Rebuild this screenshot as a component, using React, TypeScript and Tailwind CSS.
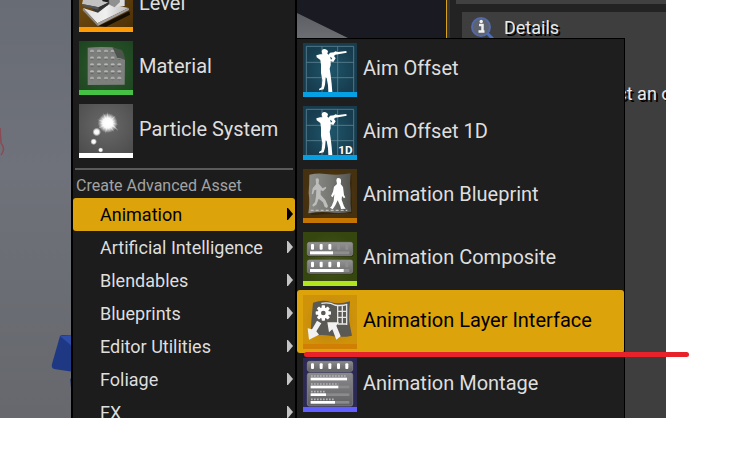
import type { ReactNode } from 'react';

function Svg({ top, children }: { top: number; children: ReactNode }) {
  return (
    <svg viewBox={`15 ${top} 162 162`} className="block size-[54px] shrink-0" aria-hidden="true">
      {children}
    </svg>
  );
}

function LevelIcon() {
  return (
    <Svg top={-66}>
      <defs>
        <linearGradient id="lvBg" x1="0" y1="0" x2="1" y2="1">
          <stop offset="0" stopColor="#7a5212" />
          <stop offset="1" stopColor="#4a2f06" />
        </linearGradient>
        <linearGradient id="lvTile" x1="0" y1="0" x2="1" y2="0">
          <stop offset="0" stopColor="#dedede" />
          <stop offset="0.5" stopColor="#f0f0f0" />
          <stop offset="1" stopColor="#b9b9b9" />
        </linearGradient>
      </defs>
      <rect x="15" y="-66" width="162" height="162" fill="url(#lvBg)" />
      <path d="M74 78 L166 34 L168 44 L96 80 Z" fill="#150e03" />
      <path d="M22 -20 L95 -50 L160 10 L70 50 Z" fill="#3a3a3a" />
      <path d="M27 24 L72 38 L106 12 L164 24 L70 70 Z" fill="url(#lvTile)" />
      <path d="M27 24 L70 70 L71 78 L26 31 Z" fill="#8a8a8a" />
      <path d="M164 24 L165 30 L71 78 L70 70 Z" fill="#a2a2a2" />
      <path d="M30 -14 L82 -8 L102 8 L74 22 L24 12 Z" fill="#c2c2c2" />
      <path d="M24 12 L74 22 L74 29 L26 19 Z" fill="#555" />
      <path d="M74 22 L102 8 L102 15 L74 29 Z" fill="#303030" />
      <path d="M104 -22 L136 -14 L140 14 L122 22 L106 14 Z" fill="#909090" />
      <path d="M136 -14 L152 0 L152 18 L122 22 L138 6 Z" fill="#dcdcdc" />
      <path d="M82 -6 L104 -2 L100 7 L86 4 Z" fill="#1d1d1d" />
      <rect x="15" y="81" width="162" height="15" fill="#ff9c05" />
    </Svg>
  );
}

function MaterialIcon() {
  const cols = [54, 75, 96, 116, 136];
  const rows = [154, 174, 194, 215, 235];
  return (
    <Svg top={123}>
      <defs>
        <radialGradient id="mtBg" cx="0.5" cy="0.5" r="0.75">
          <stop offset="0" stopColor="#2e5c2e" />
          <stop offset="1" stopColor="#1c421f" />
        </radialGradient>
        <linearGradient id="mtBump" x1="0" y1="0" x2="0" y2="1">
          <stop offset="0" stopColor="#8c8c8c" />
          <stop offset="0.45" stopColor="#b8b8b8" />
          <stop offset="1" stopColor="#4e4e4e" />
        </linearGradient>
      </defs>
      <rect x="15" y="123" width="162" height="162" fill="url(#mtBg)" />
      <path d="M41 143 Q70 140 115 142 Q140 150 153 180 L152 254 L41 255 Z" fill="#7c7f7c" />
      {rows.map((y) =>
        cols.map((x) =>
          x === 136 && y === 154 ? null : (
            <ellipse key={`${x}-${y}`} cx={x} cy={y} rx="6" ry="6" fill="url(#mtBump)" />
          ),
        ),
      )}
      <path d="M115 142 Q122 156 130 174 Q142 174 153 180 Q150 158 143 150 Z" fill="#4c554c" />
      <rect x="15" y="270" width="162" height="15" fill="#45c144" />
    </Svg>
  );
}

function ParticleIcon() {
  const rays = [0, 24, 48, 72, 96, 120, 144, 168, 192, 216, 240, 264, 288, 312, 336];
  return (
    <Svg top={312}>
      <defs>
        <radialGradient id="ptBg" cx="0.5" cy="0.4" r="0.7">
          <stop offset="0" stopColor="#6a6a6a" />
          <stop offset="1" stopColor="#4c4c4c" />
        </radialGradient>
        <radialGradient id="ptGlow">
          <stop offset="0" stopColor="#fff" />
          <stop offset="0.5" stopColor="#fff" stopOpacity="0.95" />
          <stop offset="1" stopColor="#fff" stopOpacity="0" />
        </radialGradient>
      </defs>
      <rect x="15" y="312" width="162" height="162" fill="url(#ptBg)" />
      <circle cx="101" cy="369" r="30" fill="url(#ptGlow)" />
      {rays.map((a, i) => (
        <path
          key={a}
          d={i % 2 ? 'M-4 0 L0 -25 L4 0 Z' : 'M-4 0 L0 -33 L4 0 Z'}
          transform={`translate(101 369) rotate(${a})`}
          fill="#fff"
          opacity="0.5"
        />
      ))}
      <path d="M101 369 L134 393 L108 362 Z" fill="#fff" opacity="0.5" />
      <circle cx="68" cy="396" r="13" fill="url(#ptGlow)" />
      <circle cx="59" cy="425" r="10" fill="url(#ptGlow)" />
      <circle cx="80" cy="450" r="8" fill="url(#ptGlow)" />
      <rect x="15" y="459" width="162" height="15" fill="#fff" />
    </Svg>
  );
}

function AimIcon({ oneD = false }: { oneD?: boolean }) {
  return (
    <Svg top={15}>
      <defs>
        <radialGradient id="amBg">
          <stop offset="0" stopColor="#1f566b" />
          <stop offset="1" stopColor="#173c4e" />
        </radialGradient>
      </defs>
      <rect x="15" y="15" width="162" height="162" fill="url(#amBg)" />
      <path
        d="M25 25 H167 V162 M25 25 V162 M72 25 V162 M119 25 V162 M25 73 H167 M25 119 H167"
        stroke="#5d8391"
        strokeWidth="2.5"
        fill="none"
      />
      <path
        d="M73 35 Q79 31 87 36 L90 40 L88 47 L92 50 L96 44 L108 43 L112 40 L120 42 L145 39 L146 44 L112 50 L108 54 L113 61 L106 72 L98 70 L98 82 L95 92 L98 112 L101 138 L103 162 L91 162 L90 142 L86 120 L83 118 L81 140 L77 154 L64 157 L63 153 L71 148 L73 126 L69 104 L69 80 L67 66 L56 58 L55 52 L66 49 L73 49 L71 40 Z"
        fill="#fff"
      />
      <path d="M96 56 L103 61 L99 65 Z" fill="#1f566b" />
      {oneD && (
        <text
          x="121"
          y="160"
          fontSize="35"
          fontWeight="700"
          fill="#fff"
          fontFamily="Roboto, sans-serif"
        >
          1D
        </text>
      )}
      <rect x="15" y="162" width="162" height="15" fill="#069fe3" />
    </Svg>
  );
}

function BlueprintIcon() {
  return (
    <Svg top={12}>
      <defs>
        <radialGradient id="bpBg">
          <stop offset="0" stopColor="#573a12" />
          <stop offset="1" stopColor="#45300f" />
        </radialGradient>
        <linearGradient id="bpSheet" x1="0" y1="0" x2="1" y2="0">
          <stop offset="0" stopColor="#8d8d8a" />
          <stop offset="0.5" stopColor="#777774" />
          <stop offset="1" stopColor="#535350" />
        </linearGradient>
      </defs>
      <rect x="15" y="12" width="162" height="162" fill="url(#bpBg)" />
      <path d="M37 32 L160 30 L162 144 L40 150 Z" fill="#2b1c07" opacity="0.6" />
      <path
        d="M34 29 Q60 23 84 27 Q120 32 158 25 Q154 55 158 85 Q156 115 160 140 Q125 147 94 142 Q65 139 31 145 Q36 112 32 84 Q34 55 34 29 Z"
        fill="url(#bpSheet)"
      />
      <path
        d="M53 41 Q60 37 63 44 L62 56 L74 70 L83 65 L85 69 L75 79 L68 76 L68 89 L82 105 L90 123 L87 129 L80 126 L75 112 L62 101 L55 119 L45 125 L43 120 L51 111 L54 94 L55 74 L49 76 L45 88 L41 87 L44 70 L54 58 Z"
        fill="#bdbdbb"
      />
      <path
        d="M117 40 Q126 36 129 44 L129 52 L128 57 L135 66 L138 90 L142 97 L138 100 L132 93 L131 104 L138 124 L143 131 L129 132 L127 124 L119 106 L112 121 L104 133 L96 128 L101 123 L107 108 L109 88 L104 97 L99 93 L105 80 L108 65 L117 57 L115 46 Z"
        fill="#fff"
      />
      <path d="M38 136 H148" stroke="#bebebb" strokeWidth="4" strokeDasharray="9 6" />
      <rect x="15" y="159" width="162" height="15" fill="#c47502" />
    </Svg>
  );
}

function CompositeIcon() {
  const bars = [
    { y: 43, lit: 3, fill: 105 },
    { y: 96, lit: 4, fill: 137 },
  ];
  return (
    <Svg top={12}>
      <defs>
        <radialGradient id="cpBg">
          <stop offset="0" stopColor="#46561c" />
          <stop offset="1" stopColor="#36460f" />
        </radialGradient>
        <linearGradient id="cpBar" x1="0" y1="0" x2="0" y2="1">
          <stop offset="0" stopColor="#929292" />
          <stop offset="1" stopColor="#6b6b6b" />
        </linearGradient>
      </defs>
      <rect x="15" y="12" width="162" height="162" fill="url(#cpBg)" />
      {bars.map((b) => (
        <g key={b.y}>
          <rect x="28" y={b.y + 3} width="138" height="40" rx="6" fill="#1b2405" opacity="0.7" />
          <rect x="28" y={b.y} width="136" height="40" rx="6" fill="url(#cpBar)" stroke="#8e8e8e" strokeWidth="2" />
          {[39, 65, 91, 117, 142].map((x, i) => (
            <rect key={x} x={x} y={b.y + 5} width="9" height="17" rx="3" fill={i < b.lit ? '#fff' : '#8f8f8f'} />
          ))}
          <rect x="36" y={b.y + 27} width="118" height="9" fill="#8e8e8e" />
          <rect x="36" y={b.y + 27} width={b.fill - 36} height="9" fill="#fff" />
        </g>
      ))}
      <rect x="15" y="159" width="162" height="15" fill="#b2e61c" />
    </Svg>
  );
}

function LayerIcon() {
  return (
    <Svg top={21}>
      <defs>
        <radialGradient id="lyBg">
          <stop offset="0" stopColor="#b9800b" />
          <stop offset="1" stopColor="#cf930a" />
        </radialGradient>
      </defs>
      <rect x="15" y="21" width="162" height="162" fill="url(#lyBg)" />
      <path
        d="M45 44 Q75 34 98 42 Q122 50 156 40 Q153 66 153 96 Q158 125 162 143 Q130 150 98 143 Q65 138 37 145 Q40 95 45 44 Z"
        fill="#5a5954"
      />
      <path
        d="M70 46 Q95 42 110 51 Q130 55 148 49 M119 53 V108 M146 49 V111 M133 55 V110 M119 70 H147 M119 88 H147 M119 108 H147"
        fill="none"
        stroke="#e6e6e6"
        strokeWidth="4"
      />
      <g fill="#fff" transform="translate(76 75)">
        {[0, 45, 90, 135, 180, 225, 270, 315].map((a) => (
          <rect key={a} x="-5" y="-23" width="10" height="12" rx="2" transform={`rotate(${a})`} />
        ))}
        <circle r="17" />
        <circle r="7" fill="#5a5954" />
      </g>
      <path d="M57 98 L70 106 L55 130 L63 140 L33 155 L29 121 L42 124 Z" fill="#f1f1f1" />
      <path d="M88 103 L123 103 L115 113 L128 145 L115 155 L103 124 L93 133 Z" fill="#f1f1f1" />
      <rect x="15" y="168" width="162" height="15" fill="#d07f04" />
    </Svg>
  );
}

function MontageIcon() {
  const lines = [
    { y: 74, end: 147 },
    { y: 98, end: 121 },
    { y: 121, end: 84 },
    { y: 144, end: 111 },
  ];
  return (
    <Svg top={24}>
      <defs>
        <linearGradient id="mgPanel" x1="0" y1="0" x2="0" y2="1">
          <stop offset="0" stopColor="#8a8a8d" />
          <stop offset="1" stopColor="#616164" />
        </linearGradient>
      </defs>
      <rect x="15" y="24" width="162" height="162" fill="#2c2a55" />
      <rect x="28" y="34" width="136" height="30" rx="6" fill="url(#mgPanel)" stroke="#8e8e90" strokeWidth="2" />
      {[39, 65, 91, 117, 142].map((x) => (
        <rect key={x} x={x} y="40" width="9" height="17" rx="3" fill="#fff" />
      ))}
      <rect x="28" y="69" width="136" height="99" rx="6" fill="url(#mgPanel)" stroke="#8e8e90" strokeWidth="2" />
      {lines.map((l) => (
        <g key={l.y}>
          <path d={`M39 ${l.y + 4} H${l.end}`} stroke="#b4b4b6" strokeWidth="5" strokeDasharray="5 4" />
          <rect x="38" y={l.y + 9} width="116" height="8" fill="#8b8b8e" />
          <rect x="38" y={l.y + 9} width={l.end - 38} height="8" fill="#fff" />
        </g>
      ))}
      <rect x="15" y="171" width="162" height="15" fill="#615fff" />
    </Svg>
  );
}

function AssetRow({ icon, label, active = false }: { icon: ReactNode; label: string; active?: boolean }) {
  return (
    <li>
      <button
        type="button"
        className={`flex h-[63px] w-full items-center gap-1.5 px-1.5 pt-px text-left text-xl ${
          active ? 'rounded-[3px] bg-[#dda30a] text-black' : 'text-[#dedede]'
        }`}
      >
        {icon}
        <span className="whitespace-nowrap pb-1">{label}</span>
      </button>
    </li>
  );
}

function CategoryRow({ label, active = false }: { label: string; active?: boolean }) {
  return (
    <li>
      <button
        type="button"
        aria-haspopup="menu"
        className={`flex h-[33px] w-full items-center justify-between pr-0.5 pl-[27px] text-left text-lg ${
          active ? 'rounded-[3px] bg-[#dda30a] text-black' : 'text-[#dedede]'
        }`}
      >
        <span className="whitespace-nowrap">{label}</span>
        <svg viewBox="0 0 6 12" className="mb-0.5 h-3 w-1.5" aria-hidden="true">
          <path d="M0 0 L1 0 L6 6 L1 12 L0 12 Z" fill={active ? '#000' : '#c4c4c4'} />
        </svg>
      </button>
    </li>
  );
}

function Viewport() {
  return (
    <section
      aria-label="Viewport"
      className="min-w-0 flex-1 border-r border-[#d9a21b] bg-[#191a22]"
    >
      <svg viewBox="0 0 446 418" preserveAspectRatio="xMinYMin slice" className="block h-full w-full" aria-hidden="true">
        <defs>
          <linearGradient id="floor" x1="0" y1="0" x2="0" y2="1">
            <stop offset="0" stopColor="#686c75" />
            <stop offset="0.4" stopColor="#6f727a" />
            <stop offset="1" stopColor="#66686d" />
          </linearGradient>
          <linearGradient id="wedge" x1="0" y1="0" x2="0" y2="1">
            <stop offset="0" stopColor="#5a5b60" />
            <stop offset="1" stopColor="#6d6e73" />
          </linearGradient>
        </defs>
        <rect width="200" height="418" fill="url(#floor)" />
        <path d="M290 9 L297 13 L350 39 L290 39 Z" fill="url(#wedge)" />
        <path d="M0 128 L1 143 Q6 149 1 155" fill="none" stroke="#8b4b54" strokeWidth="1.5" />
        <path d="M60 336 Q61 335 63 335 L74 335 L74 372 L54 369 Q51 368 52 364 Z" fill="#1f3884" />
        <path d="M60 336 L74 335 L74 348 Z" fill="#2d4da8" />
        <path d="M70 379 L74 377 L74 392 L71 388 Z" fill="#2a3a68" />
      </svg>
    </section>
  );
}

function DetailsPanel() {
  return (
    <aside className="flex w-[219px] shrink-0 flex-col gap-2 border-l-[3px] border-[#353535] bg-[#232323] pl-1.5">
      <div className="h-1 bg-[#414141]" />
      <div className="ml-1.5 flex-1 overflow-hidden bg-[#3e3e3e] text-lg text-[#e8e8e8]">
        <header className="flex h-8 items-center gap-2.5 pl-2">
          <svg viewBox="0 0 24 24" className="size-6" aria-hidden="true">
            <path d="M17 17 L23 23" stroke="#4d6fc0" strokeWidth="3" strokeLinecap="round" />
            <circle cx="11" cy="11" r="9" fill="#5d636e" stroke="#5369a8" strokeWidth="2" />
            <path d="M9 9 H12.5 V15 M8.5 15.5 H14.5" stroke="#f0f0f0" strokeWidth="2.5" fill="none" />
            <circle cx="11.2" cy="5.5" r="1.7" fill="#f0f0f0" />
          </svg>
          <h2 className="[text-shadow:2px_2px_0_#000]">Details</h2>
        </header>
        <p className="-mr-5 pt-9 text-right whitespace-nowrap [text-shadow:2px_2px_0_#000]">ct an obj</p>
      </div>
    </aside>
  );
}

export default function App() {
  return (
    <main className="relative h-screen overflow-hidden bg-white pr-[79px] pb-8 font-[Roboto,sans-serif]">
      <div className="relative flex h-full overflow-hidden">
        <Viewport />
        <DetailsPanel />

        <nav
          aria-label="Create asset"
          className="absolute -top-[27px] left-[71px] w-[226px] border-x-2 border-black bg-[#1c1c1c]"
        >
          <ul>
            <AssetRow icon={<LevelIcon />} label="Level" />
            <AssetRow icon={<MaterialIcon />} label="Material" />
            <AssetRow icon={<ParticleIcon />} label="Particle System" />
          </ul>
          <hr className="mx-0.5 mt-1.5 border-t-2 border-[#5a5a5a]" />
          <h2 className="h-7 px-[3px] pt-1 text-base text-[#a3a3a3]">Create Advanced Asset</h2>
          <ul>
            <CategoryRow label="Animation" active />
            <CategoryRow label="Artificial Intelligence" />
            <CategoryRow label="Blendables" />
            <CategoryRow label="Blueprints" />
            <CategoryRow label="Editor Utilities" />
            <CategoryRow label="Foliage" />
            <CategoryRow label="FX" />
          </ul>
        </nav>

        <nav
          aria-label="Animation"
          className="absolute top-[38px] left-[296px] h-full w-[329px] border-x border-black bg-[#1e1e1e] shadow-[inset_0_1px_0_#000]"
        >
          <ul>
            <AssetRow icon={<AimIcon />} label="Aim Offset" />
            <AssetRow icon={<AimIcon oneD />} label="Aim Offset 1D" />
            <AssetRow icon={<BlueprintIcon />} label="Animation Blueprint" />
            <AssetRow icon={<CompositeIcon />} label="Animation Composite" />
            <AssetRow icon={<LayerIcon />} label="Animation Layer Interface" active />
            <AssetRow icon={<MontageIcon />} label="Animation Montage" />
          </ul>
        </nav>
      </div>
      <div className="absolute top-[352px] left-[304px] h-[5px] w-[385px] rounded-full bg-[#e8222b]" />
    </main>
  );
}
